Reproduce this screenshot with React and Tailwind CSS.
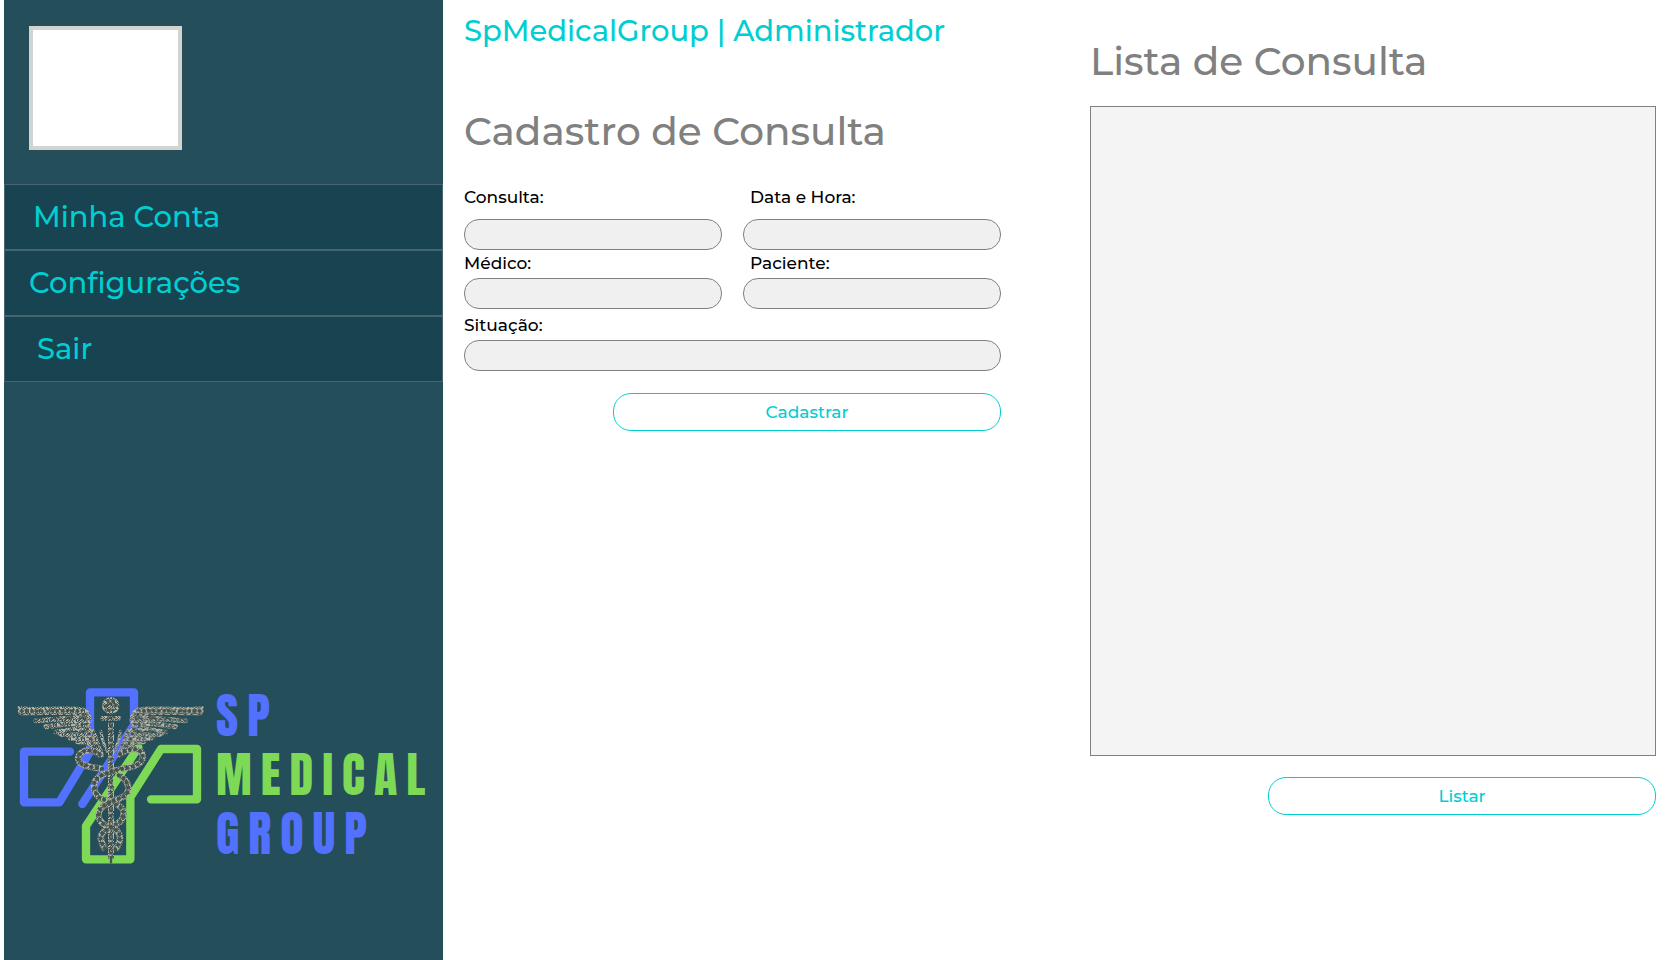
const FEATHERS = [
  { d: 'M66,123 C110,124 180,121 236,123 Q260,126 263,150', w: 22 },
  { d: 'M56,112 C90,114 120,116 150,118', w: 4 },
  { d: 'M108,152 C150,150 190,144 240,146', w: 12 },
  { d: 'M138,170 C168,168 200,158 238,160', w: 12 },
  { d: 'M166,186 C192,184 214,172 246,176', w: 10 },
  { d: 'M178,192 C200,200 224,188 254,194', w: 9 },
  { d: 'M206,204 C226,210 242,204 262,208', w: 9 },
  { d: 'M232,216 C250,220 260,216 280,222', w: 9 },
  { d: 'M250,134 C262,160 264,204 284,234', w: 18 },
  { d: 'M228,142 C232,172 246,198 264,222', w: 10 },
  { d: 'M280,184 C290,206 298,228 306,256', w: 9 },
  { d: 'M302,184 C306,208 312,224 320,244', w: 6 },
];

const SERPENTS = [
  'M306,296 C270,292 226,284 236,258 C246,236 280,236 304,256',
  'M360,252 C384,232 424,232 428,256 C430,288 392,290 352,300 C300,312 270,330 286,366 C292,382 306,388 322,392',
  'M356,316 C388,330 394,366 370,380 C344,394 290,404 296,440 C300,462 322,468 334,474',
  'M348,404 C376,410 380,446 350,462 C318,474 296,492 304,512 Q308,528 316,538',
  'M334,472 C360,482 370,506 346,538',
];

// Stippled metal texture: a repeating tile of deterministic light and dark grains.
const GRAINS = Array.from({ length: 196 }, (_, i) => {
  const n = Math.abs(Math.sin((i + 1) * 12.9898) * 43758.5453) % 1;
  return {
    x: (i % 14) * 3,
    y: Math.floor(i / 14) * 3,
    fill: n < 0.34 ? '#b4b5aa' : n < 0.66 ? '#85897f' : n < 0.9 ? '#4c5c54' : null,
  };
}).filter((g) => g.fill);

function LogoMark() {
  return (
    <svg viewBox="48 48 564 540" className="h-[180px] w-[188px] shrink-0" fill="none" aria-hidden="true">
      <g strokeWidth="25" strokeLinecap="round" strokeLinejoin="round">
        <path stroke="#5271ff" d="M210,245 H72 V397 H178 L270,245 V67 H402 V165 L247,402" />
        <path stroke="#7ed957" d="M453,388 H591 V237 H483 L391,382 V568 H258 V468 L415,232" />
      </g>
      <defs>
        <pattern id="grain" width="42" height="42" patternUnits="userSpaceOnUse">
          {GRAINS.map((g) => (
            <rect key={`${g.x}-${g.y}`} x={g.x} y={g.y} width="3" height="3" fill={g.fill} />
          ))}
        </pattern>
        <g id="wing" strokeLinecap="round">
          {FEATHERS.map(({ d, w }) => (
            <g key={d}>
              <path d={d} stroke="url(#grain)" strokeWidth={w + 3} />
              {w > 11 && <path d={d} stroke="#42544d" strokeWidth={w / 2} strokeDasharray="0.1 15" />}
            </g>
          ))}
        </g>
      </defs>
      <use href="#wing" />
      <use href="#wing" transform="translate(664 0) scale(-1 1)" />
      <circle cx="332" cy="107" r="26" fill="url(#grain)" />
      <circle cx="332" cy="107" r="15" stroke="#42544d" strokeWidth="9" strokeLinecap="round" strokeDasharray="0.1 15" />
      <path d="M308,145 H356" stroke="url(#grain)" strokeWidth="14" strokeLinecap="round" />
      <path d="M333,158 V566" stroke="url(#grain)" strokeWidth="18" />
      <path d="M333,168 V566" stroke="#42544d" strokeWidth="9" strokeLinecap="round" strokeDasharray="0.1 14" />
      <path d="M333,560 V580" stroke="#42544d" strokeWidth="7" />
      {SERPENTS.map((d) => (
        <g key={d}>
          <path d={d} stroke="#a3a59c" strokeWidth="20" strokeDasharray="3 3" />
          <path d={d} stroke="url(#grain)" strokeWidth="17" />
          <path d={d} stroke="#42544d" strokeWidth="12" strokeLinecap="round" strokeDasharray="0.1 16" />
        </g>
      ))}
    </svg>
  );
}

const NAV = [
  { label: 'Minha Conta', pad: 'pl-7' },
  { label: 'Configurações', pad: 'pl-6' },
  { label: 'Sair', pad: 'pl-8' },
];

const inputClass = 'block h-[31px] w-full rounded-[15px] border border-[#808080] bg-[#f0f0f0] px-3 text-base outline-none';
const buttonClass = 'h-[38px] w-[388px] max-w-full rounded-[18px] border border-[#00ced1] bg-white pt-0.5 text-[17px] font-medium text-[#00ced1]';

function Field({ id, label, inset, gap, className = '' }) {
  return (
    <div className={`flex flex-col ${gap} ${className}`}>
      <label htmlFor={id} className={`text-[17px] leading-5 ${inset ? 'pl-[7px]' : ''}`}>{label}</label>
      <input id={id} type="text" className={inputClass} />
    </div>
  );
}

export default function App() {
  return (
    <div className="flex min-h-screen bg-white pl-1 font-[Montserrat,Inter,sans-serif] font-medium text-black [font-variant-ligatures:none]">
      <aside className="flex w-[439px] shrink-0 flex-col bg-[#254e5b] pb-[94px]">
        <div className="mt-[26px] ml-[25px] h-[124px] w-[153px] border-4 border-[#d3d3d3] bg-white" />
        <nav className="mt-[34px]">
          {NAV.map((item) => (
            <a key={item.label} href="#" className={`flex h-[66px] items-center border border-[#486570] bg-[#184350] text-[29px] text-[#00ced1] ${item.pad}`}>
              {item.label}
            </a>
          ))}
        </nav>
        <div className="mt-auto flex items-center gap-3 pt-8 pl-3">
          <LogoMark />
          <div className="pb-0.5 text-5xl leading-[59px] font-normal tracking-[9px] text-[#5271ff] font-[Anton,Roboto_Condensed,sans-serif]">
            <div>SP</div>
            <div className="text-[#7ed957]">MEDICAL</div>
            <div>GROUP</div>
          </div>
        </div>
      </aside>
      <main className="grid grow grid-cols-[537fr_566fr] gap-x-[89px] pr-6 pl-[21px]">
        <section>
          <h1 className="pt-[11px] text-[29px] leading-10 text-[#00ced1]">SpMedicalGroup | Administrador</h1>
          <h2 className="mt-[55px] text-[39px] leading-[50px] text-[#808080]">Cadastro de Consulta</h2>
          <form className="mt-[31px]" onSubmit={(e) => e.preventDefault()}>
            <div className="grid grid-cols-2 gap-x-[21px]">
              <Field id="consulta" label="Consulta:" gap="gap-3" />
              <Field id="data" label="Data e Hora:" gap="gap-3" inset />
              <Field id="medico" label="Médico:" gap="gap-[5px]" className="mt-[3px]" />
              <Field id="paciente" label="Paciente:" gap="gap-[5px]" className="mt-[3px]" inset />
              <Field id="situacao" label="Situação:" gap="gap-[5px]" className="col-span-2 mt-[6px]" />
            </div>
            <div className="mt-[22px] flex justify-end">
              <button type="submit" className={buttonClass}>Cadastrar</button>
            </div>
          </form>
        </section>
        <section className="pt-9">
          <h2 className="text-[39px] leading-[50px] text-[#808080]">Lista de Consulta</h2>
          <div className="mt-5 h-[650px] border border-[#808080] bg-[#f4f4f4]" />
          <div className="mt-[21px] flex justify-end">
            <button type="button" className={buttonClass}>Listar</button>
          </div>
        </section>
      </main>
    </div>
  );
}
